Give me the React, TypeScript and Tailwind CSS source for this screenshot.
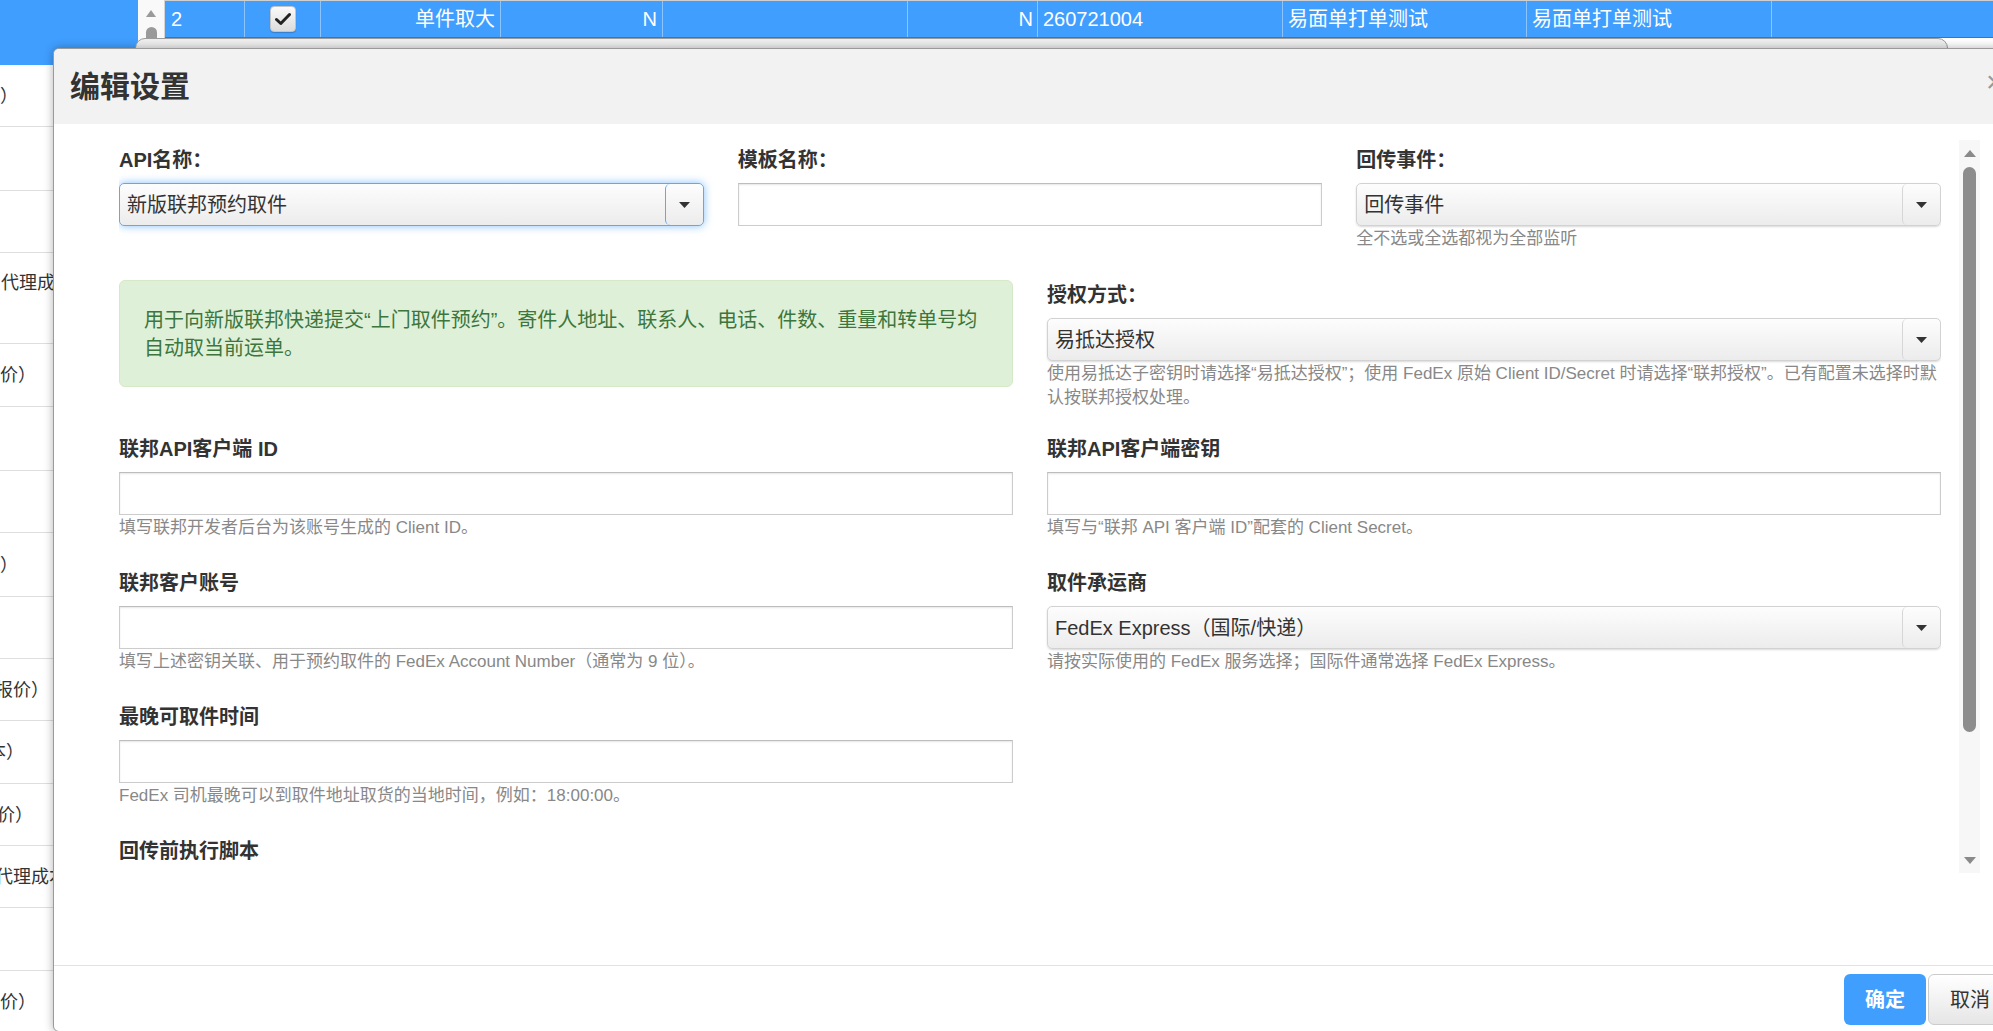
import React from "react";

const FONT = "font-['Liberation_Sans','Noto_Sans_CJK_SC',sans-serif]";

type Row = { h: string; text?: string; cls?: string; align?: string };

const sideRows: Row[] = [
  { h: "h-[62px]", text: "）", cls: "ml-[0px]", align: "items-center" },
  { h: "h-[64px]" },
  { h: "h-[62px]" },
  { h: "h-[91px]", text: "代理成本", cls: "ml-[1px]", align: "items-start pt-[18px]" },
  { h: "h-[63px]", text: "价）", cls: "ml-[0px]", align: "items-center" },
  { h: "h-[64px]" },
  { h: "h-[62px]" },
  { h: "h-[64px]", text: "）", cls: "ml-[0px]", align: "items-center" },
  { h: "h-[62px]" },
  { h: "h-[62px]", text: "报价）", cls: "-ml-[5px]", align: "items-center" },
  { h: "h-[63px]", text: "本）", cls: "-ml-[12px]", align: "items-center" },
  { h: "h-[62px]", text: "价）", cls: "-ml-[3px]", align: "items-center" },
  { h: "h-[62px]", text: "代理成本", cls: "-ml-[5px]", align: "items-center" },
  { h: "h-[63px]" },
  { h: "h-[62px]", text: "价）", cls: "ml-[0px]", align: "items-center" },
];

function Caret() {
  return (
    <svg width="11" height="6" viewBox="0 0 11 6">
      <path d="M0 0 H11 L5.5 6 Z" fill="#333" />
    </svg>
  );
}

function Select({ value, focus }: { value: string; focus?: boolean }) {
  return (
    <div
      className={
        focus
          ? "flex h-[43px] rounded-[5px] border border-[#5ea8f5] bg-linear-to-b from-[#fdfdfd] to-[#ececec] shadow-[0_0_9px_rgba(64,158,255,0.65)]"
          : "flex h-[43px] rounded-[5px] border border-[#d2d2d2] bg-linear-to-b from-[#fdfdfd] to-[#ececec] shadow-[0_1px_2px_rgba(0,0,0,0.15)]"
      }
    >
      <div className="flex flex-1 items-center pl-[7px] text-[20px] text-[#333] whitespace-nowrap">{value}</div>
      <div
        className={
          focus
            ? "flex w-[38px] items-center justify-center rounded-[5px] border-l border-[#5ea8f5]"
            : "flex w-[38px] items-center justify-center rounded-[5px] border-l border-[#d6d6d6]"
        }
      >
        <Caret />
      </div>
    </div>
  );
}

function TextInput() {
  return (
    <input
      type="text"
      className="block h-[43px] w-full border border-[#cccccc] border-t-[#bdbdbd] bg-white px-[8px] text-[20px] shadow-[inset_0_1px_2px_rgba(0,0,0,0.1)] outline-none"
    />
  );
}

function Label({ children }: { children: React.ReactNode }) {
  return <div className="h-[24px] text-[20px] font-bold leading-[24px] text-[#333] whitespace-nowrap">{children}</div>;
}

function Help({ children }: { children: React.ReactNode }) {
  return <div className="mt-[1px] text-[17px] leading-[24px] text-[#888]">{children}</div>;
}

function Field({
  label,
  control,
  help,
}: {
  label: string;
  control: React.ReactNode;
  help?: React.ReactNode;
}) {
  return (
    <div>
      <Label>{label}</Label>
      <div className="mt-[11px]">{control}</div>
      {help ? <Help>{help}</Help> : null}
    </div>
  );
}

function Check() {
  return (
    <div className="flex h-[26px] w-[26px] items-center justify-center rounded-[4px] border border-[#c4c4c4] bg-linear-to-b from-[#fafafa] to-[#dcdcdc] shadow-[0_1px_1px_rgba(0,0,0,0.2)]">
      <svg width="16" height="14" viewBox="0 0 16 14">
        <path d="M1.5 7.5 L5.8 11.5 L14.5 2.5" fill="none" stroke="#222" strokeWidth="3" strokeLinecap="round" strokeLinejoin="round" />
      </svg>
    </div>
  );
}

export default function App() {
  return (
    <div className={`relative h-[1031px] w-[1993px] overflow-hidden bg-white ${FONT}`}>
      {/* background page */}
      <div className="flex h-full">
        {/* left list */}
        <div className="w-[138px] shrink-0 overflow-hidden">
          <div className="h-[65px] bg-[#409eff]" />
          {sideRows.map((r, i) => (
            <div key={i} className={`flex ${r.h} ${r.align ?? "items-center"} border-b border-[#dedede] overflow-hidden`}>
              {r.text ? (
                <span className={`${r.cls} text-[18px] leading-[24px] text-[#333] whitespace-nowrap`}>{r.text}</span>
              ) : null}
            </div>
          ))}
        </div>
        {/* table scrollbar */}
        <div className="relative w-[27px] shrink-0 border-r border-[#d5d5d5] bg-[#f9f9f9]">
          <div className="ml-[8px] mt-[10px] h-0 w-0 border-x-[5px] border-b-[7px] border-x-transparent border-b-[#9a9a9a]" />
          <div className="ml-[8px] mt-[10px] h-[600px] w-[11px] rounded-full bg-[#9a9a9a]" />
        </div>
        {/* table */}
        <div className="flex-1">
          <div className="flex h-[38px] border-t border-[#cfcfcf] border-b border-b-[#2b78d0] bg-[#409eff] text-[20px] text-white">
            <div className="flex w-[80px] items-center border-r border-[#8cc4ff] pl-[6px]">2</div>
            <div className="flex w-[76px] items-center justify-center border-r border-[#8cc4ff]">
              <Check />
            </div>
            <div className="flex w-[180px] items-center justify-end border-r border-[#8cc4ff] pr-[5px]">单件取大</div>
            <div className="flex w-[162px] items-center justify-end border-r border-[#8cc4ff] pr-[5px]">N</div>
            <div className="w-[245px] border-r border-[#8cc4ff]" />
            <div className="flex w-[130px] items-center justify-end border-r border-[#8cc4ff] pr-[4px]">N</div>
            <div className="flex w-[245px] items-center border-r border-[#8cc4ff] pl-[5px]">260721004</div>
            <div className="flex w-[244px] items-center border-r border-[#8cc4ff] pl-[5px]">易面单打单测试</div>
            <div className="flex w-[245px] items-center border-r border-[#8cc4ff] pl-[5px]">易面单打单测试</div>
            <div className="flex-1" />
          </div>
        </div>
      </div>

      {/* panel behind the dialog */}
      <div className="absolute left-[135px] top-[38px] h-[40px] w-[1813px] rounded-t-[10px] border border-[#9c9c9c] bg-[#efefef]" />

      {/* dialog */}
      <div className="absolute left-[53px] top-[48px] flex h-[984px] w-[1975px] flex-col overflow-hidden rounded-[6px] border border-[#9a9a9a] bg-white shadow-[0_0_10px_rgba(0,0,0,0.3)]">
        {/* header */}
        <div className="relative flex h-[75px] shrink-0 items-center bg-[#f2f2f2] pl-[16px]">
          <div className="text-[30px] font-bold text-[#333]">编辑设置</div>
          <div className="absolute left-[1932px] top-[18px] text-[30px] leading-[30px] text-[#999]">×</div>
        </div>

        {/* body */}
        <div className="h-[841px] shrink-0 pt-[16px]">
          <div className="flex h-[733px]">
            <div className="w-[1822px] shrink-0 overflow-hidden pl-[0px] ml-[65px] pt-[8px]">
              {/* row 1 */}
              <div className="grid grid-cols-3 gap-x-[34px]">
                <Field label="API名称：" control={<Select value="新版联邦预约取件" focus />} />
                <Field label="模板名称：" control={<TextInput />} />
                <Field label="回传事件：" control={<Select value="回传事件" />} help="全不选或全选都视为全部监听" />
              </div>
              {/* row 2 */}
              <div className="mt-[29px] grid grid-cols-2 gap-x-[34px]">
                <div className="h-[107px] rounded-[6px] border border-[#d6e9c6] bg-[#dff0d8] px-[24px] py-[25px] text-[20px] leading-[28px] text-[#3c763d]">
                  用于向新版联邦快递提交“上门取件预约”。寄件人地址、联系人、电话、件数、重量和转单号均自动取当前运单。
                </div>
                <div className="pt-[3px]">
                  <Field
                    label="授权方式："
                    control={<Select value="易抵达授权" />}
                    help="使用易抵达子密钥时请选择“易抵达授权”；使用 FedEx 原始 Client ID/Secret 时请选择“联邦授权”。已有配置未选择时默认按联邦授权处理。"
                  />
                </div>
              </div>
              {/* row 3 */}
              <div className="mt-[27px] grid grid-cols-2 gap-x-[34px]">
                <Field label="联邦API客户端 ID" control={<TextInput />} help="填写联邦开发者后台为该账号生成的 Client ID。" />
                <Field label="联邦API客户端密钥" control={<TextInput />} help="填写与“联邦 API 客户端 ID”配套的 Client Secret。" />
              </div>
              {/* row 4 */}
              <div className="mt-[31px] grid grid-cols-2 gap-x-[34px]">
                <Field
                  label="联邦客户账号"
                  control={<TextInput />}
                  help="填写上述密钥关联、用于预约取件的 FedEx Account Number（通常为 9 位）。"
                />
                <Field
                  label="取件承运商"
                  control={<Select value="FedEx Express（国际/快递）" />}
                  help="请按实际使用的 FedEx 服务选择；国际件通常选择 FedEx Express。"
                />
              </div>
              {/* row 5 */}
              <div className="mt-[31px] grid grid-cols-2 gap-x-[34px]">
                <Field
                  label="最晚可取件时间"
                  control={<TextInput />}
                  help="FedEx 司机最晚可以到取件地址取货的当地时间，例如：18:00:00。"
                />
                <div />
              </div>
              {/* row 6 */}
              <div className="mt-[31px]">
                <Label>回传前执行脚本</Label>
                <div className="mt-[11px] h-[120px] w-[894px] border border-[#ccc]" />
              </div>
            </div>
            {/* scrollbar */}
            <div className="ml-[18px] flex w-[21px] shrink-0 flex-col items-center bg-[#f7f7f7] pt-[10px]">
              <div className="h-0 w-0 border-x-[6px] border-b-[7px] border-x-transparent border-b-[#8a8a8a]" />
              <div className="mt-[10px] h-[565px] w-[13px] rounded-full bg-[#8c8c8c]" />
              <div className="mt-auto mb-[9px] h-0 w-0 border-x-[6px] border-t-[7px] border-x-transparent border-t-[#8a8a8a]" />
            </div>
          </div>
        </div>

        {/* footer */}
        <div className="flex h-[66px] shrink-0 justify-end gap-[2px] border-t border-[#e2e2e2] pr-[15px] pt-[8px]">
          <button className="h-[51px] w-[82px] rounded-[6px] bg-[#409eff] text-[20px] font-bold text-white">确定</button>
          <button className="h-[51px] w-[84px] rounded-[6px] border border-[#cccccc] bg-linear-to-b from-[#ffffff] to-[#e6e6e6] text-[20px] text-[#333]">
            取消
          </button>
        </div>
      </div>
    </div>
  );
}
